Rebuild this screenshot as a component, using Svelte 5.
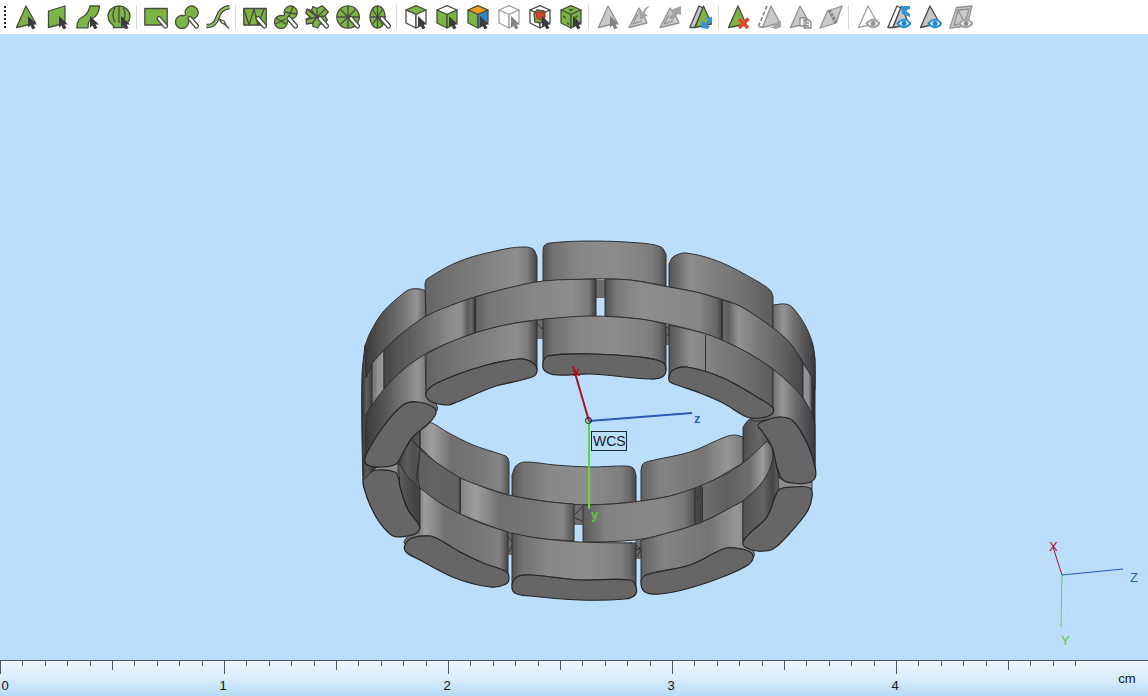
<script lang="ts">
  type Layer = [cls: string, d: string];
  type Tool = { label: string; layers: Layer[]; split?: boolean };
  type Stop = [offset: number, grey: number];
  type Block = { top: number[]; bottom: number[]; shade: Stop[] };

  const cursor: Layer = ['cursor', 'M14 11V22.500l2.500-2 2 4 3-1.500-2-3.500h3.500Z'];
  const greyCursor: Layer = ['cursor-grey', cursor[1]];
  const pen: Layer[] = [
    ['pen-edge', 'M15 13.500L21.500 21'],
    ['pen', 'M15 13.500L21.500 21']
  ];
  const tri = 'M12 1L2.500 22.500 21.500 18Z';
  const cubeTop = 'M12 .7L22 5 12 9.500 2 5Z';
  const cubeLeft = 'M2 5v13l10 5V9.500Z';
  const cubeRight = 'M22 5v13l-10 5V9.500Z';
  const blobs = 'M10.500 9.500A6.500 6.500 0 1 1 17 14Q14 14.500 13.500 17.500A6.500 6.500 0 1 1 7.500 10.500Q10.500 11 10.500 9.500Z';
  const eye = 'M10.500 18.500q6.500-7.500 13 0q-6.500 7.500-13 0Z';
  const pupil = 'M17 16a2.500 2.500 0 1 0 .1 0Z';

  const tools: Tool[] = [
    { label: 'Mark triangle', layers: [['green', tri], cursor] },
    { label: 'Mark plane', layers: [['green', 'M3.500 6L20 1v17L3.500 22.500Z'], cursor] },
    { label: 'Mark surface', layers: [['green', 'M.8 22.800C1 15 4 13 8 11S13 5 14 1h9.500C23 8 21 11 17 13S12 17 12 22.800Z'], cursor] },
    { label: 'Mark shell', layers: [['green', 'M6.500 22.500Q7 20 3.500 18A11 10.500 0 1 1 20.500 18Q17 19 17.500 22.500Z'], ['line', 'M8 2.500q-4 7 0 15M12 1v17M16 2.500q4 7 0 13'], cursor] },

    { label: 'Rectangle marking', split: true, layers: [['green', 'M.8 3.500h22.400V20H.8Z'], ...pen] },
    { label: 'Lasso marking', layers: [['green', blobs], ...pen] },
    { label: 'Curve marking', layers: [['tube-edge', 'M.5 21Q9 21.500 11.500 12.500T23.500 2'], ['tube', 'M.5 21Q9 21.500 11.500 12.500T23.500 2'], ['line', 'M17 17.500l6 6'], ['pen-tip', 'M13 14l5 2 2 4-4-2Z']] },

    { label: 'Mark triangles in rectangle', split: true, layers: [['green', 'M.8 3.500h22.400V20H.8Z'], ['line', 'M1 4l5 16 5-16 4 16 6-16'], ...pen] },
    { label: 'Mark triangles in lasso', layers: [['green', blobs], ['line', 'M2 13l10 6M1.500 19l10-5M11 7l12 2M14 13l5-11'], ...pen] },
    { label: 'Mark star', layers: [['green', 'M12 3.500L17 .8 20.500 4 23.200 7 20 11 22.500 15 19 18.500 15 19 12.500 23 8 21.500 7.500 18 1.500 19 1 14.500 5 12 .8 8 2 4 6.500 5.500 8 1.500Z'], ['line', 'M12 12V3.500M12 12L20.500 4M12 12l8-1M12 12l7 6.500M12 12l-4.500 6M12 12L1 14.500M12 12L6.500 5.500M12 12L2 4'], ...pen] },
    { label: 'Mark disc', layers: [['green', 'M12 .8a11.200 11.200 0 1 0 .1 0Z'], ['line', 'M12 1v22M1 12h22M4.500 4.500l15 15M19.500 4.500l-15 15'], ...pen] },
    { label: 'Mark ellipse', layers: [['green', 'M10.500 1a7.500 11 0 1 0 .1 0Z'], ['line', 'M10.500 1v22M3 12h15M5.500 4.500l10 15M15.500 4.500l-10 15'], ...pen] },

    { label: 'Mark top of part', split: true, layers: [['green', cubeTop], ['white', cubeLeft], ['white', cubeRight], cursor] },
    { label: 'Mark sides of part', layers: [['white', cubeTop], ['green', cubeLeft], ['green', cubeRight], cursor] },
    { label: 'Mark by colour', layers: [['orange', cubeTop], ['green', cubeLeft], ['blue', cubeRight], cursor] },
    { label: 'Unmark part', layers: [['ghost', cubeTop], ['ghost', cubeLeft], ['ghost', cubeRight], greyCursor] },
    { label: 'Mark inside', layers: [['white', cubeTop], ['white', cubeLeft], ['white', cubeRight], ['green', 'M6 9l3-4 7 1 1 6-4 6-6-1Z'], ['red', 'M8 8l4-1 5 1-1 5-3 2-4-2Z'], cursor] },
    { label: 'Mark whole part', layers: [['green', cubeTop], ['green', cubeLeft], ['green', cubeRight], ['spot', 'M9 4.500l6-1-3 3ZM4 10l3 2v2l-3-2ZM8 17l2 1v2l-2-1ZM15 12l4-2-1 3Z'], cursor] },

    { label: 'Mark single', split: true, layers: [['grey', tri], greyCursor] },
    { label: 'Shrink marking', layers: [['grey', 'M12 3L2 22.500 20 18l-2-5Z'], ['greyline', 'M11 9L6 19l9-3'], ['greyfill', 'M23.500 1Q17 2 16 7l-4-1 1 9 8-5-3-1Q18 4 23.500 1Z']] },
    { label: 'Expand marking', layers: [['grey', 'M12 3L2 22.500 21 18l-2-5Z'], ['greyline', 'M11 10L6 19l9-3'], ['greyfill', 'M11 13l5-6-3-2 10-4v9l-3-1-5 6Z']] },
    { label: 'Invert marking', layers: [['shade', 'M10 1L.8 22.500h5L14 3Z'], ['green', 'M14.500 1L6 22.500 22.500 19Z'], ['bluefill', 'M16 13l7-1v7l-2-2-3 3-2-1 3-4ZM12 23l1-7 3 2 2 0-1 3 4 0-2 3Z']] },

    { label: 'Delete marked', split: true, layers: [['green', 'M12 1L2.500 22.500 20 19Z'], ['cross', 'M13 14l9 9M22.500 13.500L13 23']] },
    { label: 'Separate marked', layers: [['dash', 'M10 1L1 22h5'], ['grey', 'M14 1L5.500 22.500 23 18Z'], ['greyfill', 'M12 22q7 0 8-5l4-1v6l-5 2Z']] },
    { label: 'Copy marked', layers: [['grey', tri], ['doc', 'M12 13h6v8h-6ZM16 15h5l2 2v6h-7ZM18 18h3M18 21h3']] },
    { label: 'Fold surface', layers: [['grey', 'M8.500 6L23 1l-6 17L1 23Z'], ['fold', 'M10 5l7 13']] },

    { label: 'Hide marked', split: true, layers: [['ghost', tri], ['eye-grey', eye], ['pupil', pupil]] },
    { label: 'Swap visibility', layers: [['white', 'M10 1L.8 22.500h5L14 3Z'], ['shade', 'M14.500 1L6 22.500 22 20Z'], ['bluefill', 'M14 1h9v3q-2 0-4 2l4 3v3l-8-3Z'], ['eye', eye], ['pupil', pupil]] },
    { label: 'Show marked', layers: [['shade', tri], ['eye', eye], ['pupil', pupil]] },
    { label: 'Show surface', layers: [['grey', 'M7.500 2.500L23 1l-5 20L.8 23Z'], ['greyline', 'M9 5l11-1-4 14-11 2ZM9 5l7 13'], ['eye-grey', eye], ['pupil', pupil]] }
  ];

  // smooth curve through flat x,y pairs; long runs stay flat, short ones round the corners
  function spline(p: number[], closed = false) {
    const n = p.length / 2;
    const at = (i: number) => {
      const k = closed ? (i + n) % n : Math.max(0, Math.min(n - 1, i));
      return [p[2 * k], p[2 * k + 1]];
    };
    const len = (a: number[], b: number[]) => Math.hypot(b[0] - a[0], b[1] - a[1]) || 1;
    const tangent = (i: number) => {
      const a = at(i - 1);
      const c = at(i + 1);
      return [(c[0] - a[0]) / len(a, c), (c[1] - a[1]) / len(a, c)];
    };
    let d = `${p[0]} ${p[1]}`;
    for (let i = 0; i < (closed ? n : n - 1); i++) {
      const b = at(i);
      const c = at(i + 1);
      const s = len(b, c) / 3;
      const t = tangent(i);
      const u = tangent(i + 1);
      d += `C${b[0] + t[0] * s} ${b[1] + t[1] * s} ${c[0] - u[0] * s} ${c[1] - u[1] * s} ${c[0]} ${c[1]}`;
    }
    return d;
  }
  const outline = (b: Block) => `M${spline(b.top)}L${spline(b.bottom)}Z`;
  const face = (p: number[]) => `M${spline(p, true)}Z`;
  const grey = (v: number) => `rgb(${v},${v},${v})`;

  const flat: Stop[] = [[0, 82], [0.08, 114], [0.3, 136], [0.6, 140], [0.88, 126], [0.95, 105], [1, 70]];
  const leftSide: Stop[] = [[0, 100], [0.15, 110], [0.5, 126], [0.82, 142], [0.92, 122], [1, 66]];
  const rightSide: Stop[] = [[0, 85], [0.1, 112], [0.2, 142], [0.35, 132], [0.7, 114], [1, 92]];
  const farLeft: Stop[] = [[0, 58], [0.3, 86], [0.62, 115], [0.85, 148], [1, 100]];
  const farRight: Stop[] = [[0, 108], [0.25, 148], [0.5, 112], [0.8, 80], [1, 55]];
  const lowLeft: Stop[] = [[0, 132], [0.14, 158], [0.35, 112], [0.65, 118], [0.9, 134], [1, 82]];
  const lowRight: Stop[] = [[0, 98], [0.2, 132], [0.6, 116], [0.85, 150], [1, 122]];

  // lower half of the ring, seen from inside
  const lower: Block[] = [
    { top: [398, 463, 412, 425, 420, 422], bottom: [426, 450, 426, 500, 420, 535, 402, 500], shade: [[0, 60], [0.3, 92], [0.55, 78], [1, 98]] },
    { top: [420, 427, 425, 423, 432, 423, 447, 432, 473, 445, 500, 454, 507, 457, 509, 462], bottom: [509, 495, 483, 487, 460, 478, 437, 463, 420, 447], shade: lowLeft },
    { top: [512, 475, 516, 466, 525, 462, 555, 465, 590, 467, 625, 466, 633, 468, 636, 475], bottom: [636, 502, 590, 505, 550, 502, 512, 496], shade: flat },
    { top: [743, 427, 750, 419, 765, 417, 785, 440], bottom: [785, 500, 743, 500], shade: [[0, 78], [0.4, 105], [0.75, 62], [1, 90]] },
    { top: [641, 470, 643, 464, 650, 461, 690, 452, 725, 437, 735, 435, 743, 437], bottom: [743, 463, 700, 487, 670, 496, 641, 501], shade: lowRight },
    { top: [412, 440, 423, 452, 437, 463, 460, 478], bottom: [460, 514, 440, 503, 420, 488, 420, 448], shade: [[0, 92], [0.5, 100], [1, 96]] },
    { top: [460, 478, 483, 487, 508, 495, 550, 502, 574, 504], bottom: [574, 541, 537, 538, 507, 532, 460, 514], shade: lowLeft },
    { top: [583, 505, 612, 504, 641, 501, 670, 496, 695, 488], bottom: [695, 525, 653, 537, 623, 541, 583, 542], shade: [[0, 90], [0.2, 130], [0.7, 136], [0.9, 120], [1, 82]] },
    { top: [695, 488, 720, 477, 743, 463, 767, 441], bottom: [772, 447, 773, 460, 763, 483, 743, 501, 700, 523, 695, 525], shade: [[0, 78], [0.08, 65], [0.1, 110], [0.4, 96], [0.7, 110], [0.86, 155], [1, 95]] },
    { top: [398, 462, 408, 477, 420, 489], bottom: [420, 528, 408, 510, 400, 487], shade: [[0, 98], [0.4, 78], [1, 65]] },
    { top: [420, 488, 440, 503, 460, 514, 483, 524, 508, 532], bottom: [508, 574, 483, 563, 460, 552, 440, 540, 430, 536, 412, 538, 405, 544, 408, 536, 420, 529], shade: [[0, 105], [0.14, 125], [0.2, 158], [0.4, 112], [0.75, 120], [0.92, 128], [1, 70]] },
    { top: [512, 533, 537, 538, 580, 542, 636, 543], bottom: [636, 587, 630, 580, 580, 580, 530, 575, 517, 577, 512, 585], shade: flat },
    { top: [641, 540, 653, 537, 700, 523, 743, 501], bottom: [743, 540, 753, 550, 753, 558, 750, 552, 735, 548, 723, 549, 690, 565, 650, 574, 641, 582], shade: lowRight },
    { top: [743, 501, 760, 485, 771, 466, 774, 447], bottom: [780, 488, 775, 497, 767, 517, 743, 542], shade: [[0, 82], [0.55, 98], [0.8, 70], [1, 100]] }
  ];

  // upper half, outer row first
  const upper: Block[] = [
    { top: [363, 480, 362, 440, 362, 375, 365, 345], bottom: [374, 345, 374, 400, 385, 430, 378, 466], shade: [[0, 45], [0.2, 95], [0.5, 58], [1, 80]] },
    { top: [805, 340, 813, 350, 815, 362, 815, 400, 815, 475], bottom: [798, 450, 792, 400], shade: [[0, 110], [0.5, 75], [1, 45]] },
    { top: [365, 346, 370, 333, 383, 312, 405, 292, 412, 289, 420, 289, 426, 291], bottom: [426, 316, 400, 335, 384, 350, 373, 363, 366, 378], shade: farLeft },
    { top: [425, 284, 427, 279, 460, 261, 500, 250, 522, 247, 533, 249, 537, 257], bottom: [537, 282, 500, 290, 460, 302, 426, 316], shade: leftSide },
    { top: [543, 253, 544, 246, 550, 243, 590, 241, 640, 243, 661, 247, 666, 254], bottom: [666, 286, 630, 280, 590, 279, 543, 281], shade: flat },
    { top: [669, 264, 673, 257, 686, 253, 720, 262, 755, 280, 770, 290, 773, 296], bottom: [773, 328, 740, 306, 700, 293, 669, 287], shade: rightSide },
    { top: [773, 305, 785, 304, 792, 307, 805, 325, 813, 345, 815, 360], bottom: [815, 390, 805, 366, 790, 343, 773, 328], shade: farRight },
    { top: [372, 363, 384, 350], bottom: [384, 390, 372, 406], shade: [[0, 110], [0.5, 145], [1, 155]] },
    { top: [384, 350, 400, 335, 426, 316, 460, 302, 475, 297], bottom: [475, 333, 448, 343, 425, 354, 404, 369, 384, 389], shade: [[0, 70], [0.4, 105], [0.75, 140], [0.85, 145], [0.92, 90], [0.96, 105], [1, 60]] },
    { top: [475, 297, 500, 290, 543, 281, 596, 279], bottom: [596, 316, 537, 320, 505, 325, 475, 333], shade: [[0, 90], [0.1, 118], [0.5, 134], [0.8, 142], [0.94, 122], [1, 60]] },
    { top: [605, 279, 630, 280, 669, 287, 700, 293, 722, 300], bottom: [722, 340, 703, 333, 672, 325, 640, 319, 605, 316], shade: [[0, 80], [0.1, 122], [0.3, 142], [0.8, 134], [0.95, 104], [1, 68]] },
    { top: [722, 300, 740, 306, 773, 328, 790, 343, 803, 363], bottom: [803, 398, 789, 383, 773, 369, 750, 354, 722, 340], shade: [[0, 105], [0.08, 96], [0.2, 145], [0.35, 130], [0.75, 98], [1, 70]] },
    { top: [803, 363, 812, 377], bottom: [812, 416, 803, 398], shade: [[0, 150], [0.6, 145], [1, 75]] },
    { top: [366, 414, 384, 389, 404, 369, 425, 354], bottom: [426, 390, 435, 401, 436, 411, 417, 402, 403, 405, 383, 427, 367, 453, 365, 464], shade: [[0, 58], [0.3, 88], [0.55, 122], [0.72, 150], [0.85, 120], [1, 105]] },
    { top: [426, 354, 448, 343, 475, 333, 505, 325, 537, 320], bottom: [537, 370, 533, 363, 520, 359, 483, 366, 437, 383, 426, 394], shade: leftSide },
    { top: [543, 319, 590, 316, 640, 319, 666, 324], bottom: [666, 370, 662, 362, 640, 357, 590, 354, 548, 356, 543, 364], shade: flat },
    { top: [669, 325, 703, 333, 722, 340, 750, 354, 773, 369], bottom: [773, 410, 757, 397, 723, 378, 687, 367, 673, 370, 669, 378], shade: rightSide },
    { top: [773, 369, 789, 383, 803, 398, 812, 415, 815, 425], bottom: [815, 468, 807, 443, 793, 421, 780, 417, 767, 420, 751, 418, 766, 415, 773, 409], shade: [[0, 100], [0.3, 105], [0.5, 150], [0.7, 105], [1, 58]] }
  ];

  const lowerFaces = [
    [363, 480, 366, 473, 380, 470, 395, 472, 398, 476, 400, 487, 408, 510, 419, 525, 418, 532, 407, 536, 393, 536, 380, 523, 370, 505, 364, 488],
    [405, 545, 412, 538, 430, 536, 440, 540, 460, 552, 483, 563, 505, 571, 509, 577, 506, 584, 490, 587, 455, 578, 420, 560, 406, 552],
    [512, 585, 517, 577, 530, 575, 580, 580, 630, 580, 636, 587, 635, 595, 625, 599, 580, 600, 530, 596, 515, 593],
    [641, 582, 646, 575, 690, 565, 723, 549, 735, 548, 750, 552, 753, 558, 748, 565, 725, 576, 690, 588, 660, 594, 645, 592],
    [743, 542, 750, 533, 767, 517, 775, 497, 780, 489, 793, 487, 810, 488, 812, 497, 807, 512, 790, 533, 773, 549, 757, 551, 745, 547]
  ];
  const upperFaces = [
    [365, 462, 367, 453, 383, 427, 403, 405, 417, 402, 433, 407, 436, 413, 430, 422, 412, 438, 403, 453, 396, 464, 383, 467, 370, 466],
    [426, 393, 437, 383, 483, 366, 520, 359, 533, 363, 537, 371, 532, 377, 493, 387, 457, 402, 447, 405, 430, 401],
    [543, 363, 548, 356, 590, 354, 640, 357, 662, 362, 666, 370, 662, 377, 650, 379, 590, 374, 557, 375, 545, 371],
    [669, 377, 673, 370, 687, 367, 723, 378, 757, 397, 773, 408, 772, 414, 760, 418, 747, 417, 723, 403, 700, 393, 680, 386, 670, 382],
    [758, 425, 767, 420, 780, 417, 793, 421, 807, 443, 815, 467, 815, 478, 807, 483, 793, 483, 783, 480, 777, 467, 772, 447, 762, 431]
  ];

  const ticks = Array.from({ length: 49 }, (_, i) => ({
    x: Math.round(i * 22.4) + 0.5,
    length: i % 10 === 0 ? 13 : i % 5 === 0 ? 9 : 5
  }));
  const marks = [0, 1, 2, 3, 4];
</script>

{#snippet blocks(list: Block[], id: string)}
  {#each list as block, i}
    <linearGradient id="{id}{i}">
      {#each block.shade as [offset, v]}
        <stop {offset} stop-color={grey(v)} />
      {/each}
    </linearGradient>
    <path class="block" d={outline(block)} fill="url(#{id}{i})" />
  {/each}
{/snippet}

<div class="app">
  <div class="toolbar" role="toolbar" aria-label="Marking">
    <span class="grip"></span>
    {#each tools as tool}
      {#if tool.split}<span class="separator"></span>{/if}
      <button type="button" aria-label={tool.label}>
        <svg viewBox="0 0 24 24" aria-hidden="true">
          {#each tool.layers as [cls, d]}
            <path class={cls} {d} />
          {/each}
        </svg>
      </button>
    {/each}
  </div>

  <main>
    <svg class="scene" viewBox="0 34 1148 626" role="img" aria-label="Ring model">
      <!-- pins between the links -->
      <path class="pin" d="M537 318h7v21h-7ZM665 325h5v20h-5ZM595 280h11v18h-11Z" />
      <path class="pin" d="M507 531h6v24h-6ZM635 540h8v19h-8ZM573 504h11v21h-11Z" />
      <path class="pin-edge" d="M537 323l5 6 2-4M667 327l3 4-3 5M508 536l5 7-4 9M575 515l7-8M575 518l7 3M630 542l10 6-5 2 6-1-4 8" />

      {@render blocks(lower, 'lower')}
      <path class="bridge" d="M363 464h35v10l-18-4-17 6Z" />
      <path class="bridge" d="M778 478l15 5 19-1v8l-19-3-14 3Z" />
      {#each lowerFaces as f}
        <path class="face" d={face(f)} />
      {/each}
      {@render blocks(upper, 'upper')}
      {#each upperFaces as f}
        <path class="face" d={face(f)} />
      {/each}
      <path class="seam" d="M475.500 298v35M722.500 301v38M705.500 335v36M460.500 479v35M702.500 487v35M697.500 496v5M420 430v18l-4 35" />

      <g class="axes">
        <path class="x" d="M589 421L573 366" />
        <path class="y" d="M589 421V509" />
        <path class="z" d="M589 421L692 413" />
        <circle cx="588.500" cy="420.500" r="3" />
        <text class="x-label" x="573" y="376">x</text>
        <text class="y-label" x="591" y="519">y</text>
        <text class="z-label" x="694" y="423">z</text>
      </g>
      <rect class="tag" x="591.500" y="431.500" width="35" height="19" />
      <text class="tag-text" x="593" y="446">WCS</text>

      <g class="compass">
        <path class="x" d="M1062 575L1053 547" />
        <path class="y" d="M1062 575L1061 627" />
        <path class="z" d="M1062 575L1123 569" />
        <text class="x-label" x="1049" y="551">X</text>
        <text class="y-label" x="1061" y="645">Y</text>
        <text class="z-label" x="1130" y="582">Z</text>
      </g>
    </svg>
  </main>

  <footer>
    <svg class="ruler" viewBox="0 0 1148 36" role="img" aria-label="Scale in cm">
      <path d="M0 .5H1148" />
      {#each ticks as tick}
        <path d="M{tick.x} 1v{tick.length}" />
      {/each}
      {#each marks as n}
        <text x={n === 0 ? 5 : n * 224 - 1} y="30">{n}</text>
      {/each}
      <text x="1127" y="23">cm</text>
    </svg>
  </footer>
</div>

<style>
  :global(body) { margin: 0; background: #badefb; }
  .app {
    display: grid;
    grid-template-rows: auto 1fr auto;
    height: 100vh;
    overflow: hidden;
    font-family: "Liberation Sans", Arial, sans-serif;
  }

  .toolbar { display: flex; align-items: center; height: 34px; padding-left: 4px; background: #fff; }
  .grip {
    width: 2px;
    height: 22px;
    margin-right: 4px;
    background: repeating-linear-gradient(#222 0 2px, transparent 2px 4px);
  }
  .separator { position: relative; width: 6px; height: 24px; }
  .separator::after { content: ""; position: absolute; left: 2px; top: 0; bottom: 0; width: 1px; background: #d8d8d8; }
  button { display: grid; place-items: center; width: 31px; height: 34px; padding: 0; border: 0; background: transparent; cursor: pointer; }
  button:hover { background: #eaf4fd; }
  button svg { width: 24px; height: 24px; }
  button path { stroke: #484b40; stroke-width: 1.3; stroke-linejoin: round; fill: none; }

  button .green { fill: #7db545; }
  button .white { fill: #fff; }
  button .orange { fill: #f79a20; }
  button .blue { fill: #3287c8; }
  button .red { fill: #d8432b; stroke: #a33a25; }
  button .shade { fill: #c4c6c8; }
  button .spot { fill: #3f5a26; stroke: none; }
  button .grey { fill: #c9c9c9; stroke: #929292; }
  button .ghost { fill: #fff; stroke: #a0a0a0; }
  button .greyline { stroke: #909090; }
  button .greyfill { fill: #a3a3a3; stroke: none; }
  button .bluefill { fill: #2f94dc; stroke: none; }
  button .cursor { fill: #3b3b40; stroke: none; }
  button .cursor-grey { fill: #858585; stroke: none; }
  button .pen-edge { stroke-width: 5; stroke-linecap: round; }
  button .pen { stroke: #fff; stroke-width: 2.6; stroke-linecap: round; }
  button .pen-tip { fill: #fff; }
  button .tube-edge { stroke-width: 4.6; }
  button .tube { stroke: #8dbd63; stroke-width: 2.2; }
  button .cross { stroke: #e2452c; stroke-width: 3.4; }
  button .dash { stroke: #808080; stroke-width: 1.6; stroke-dasharray: 4 2; }
  button .fold { stroke: #858585; stroke-width: 3.4; stroke-dasharray: 3 1; }
  button .doc { fill: #f4f4f4; stroke: #8b8b8b; }
  button .eye { fill: #fff; stroke: #2b8ed8; stroke-width: 2; }
  button .eye-grey { fill: #fff; stroke: #a3a3a3; stroke-width: 2; }
  button .pupil { fill: #8b9299; stroke: none; }
  button .eye + .pupil { fill: #1f82cf; }

  main { min-height: 0; background: #badefb; }
  .scene { display: block; width: 100%; height: 100%; }
  .block { stroke: #303030; stroke-width: 1; stroke-linejoin: round; }
  .face { fill: #666; stroke: #242424; stroke-width: 1.2; stroke-linejoin: round; }
  .pin { fill: #6c6c6c; }
  .pin-edge { fill: none; stroke: #333; stroke-width: 1; }
  .bridge { fill: #8d8d8d; stroke: #444; stroke-width: 1; }
  .seam { fill: none; stroke: #333; stroke-width: 1; }

  .axes path { fill: none; stroke-width: 2; }
  .axes circle { fill: none; stroke: #111; stroke-width: 1; }
  .axes text { font-size: 13px; font-weight: bold; }
  .compass path { fill: none; stroke-width: 1; }
  .compass text { font-size: 13px; }
  .x { stroke: #b01022; }
  .y { stroke: #62d82e; }
  .z { stroke: #2a5bb5; }
  .x-label { fill: #b01022; }
  .y-label { fill: #55cf38; }
  .z-label { fill: #2f62b8; }
  .tag { fill: none; stroke: #1c2835; stroke-width: 1; }
  .tag-text { font-size: 14px; fill: #15202c; }

  footer { background: linear-gradient(#eef7fe, #d9edfc 50%, #b7dbf7); }
  .ruler { display: block; width: 100%; height: auto; }
  .ruler path { stroke: #4a5a6c; stroke-width: 1; }
  .ruler text { font-size: 13px; fill: #10151c; text-anchor: middle; }
</style>
